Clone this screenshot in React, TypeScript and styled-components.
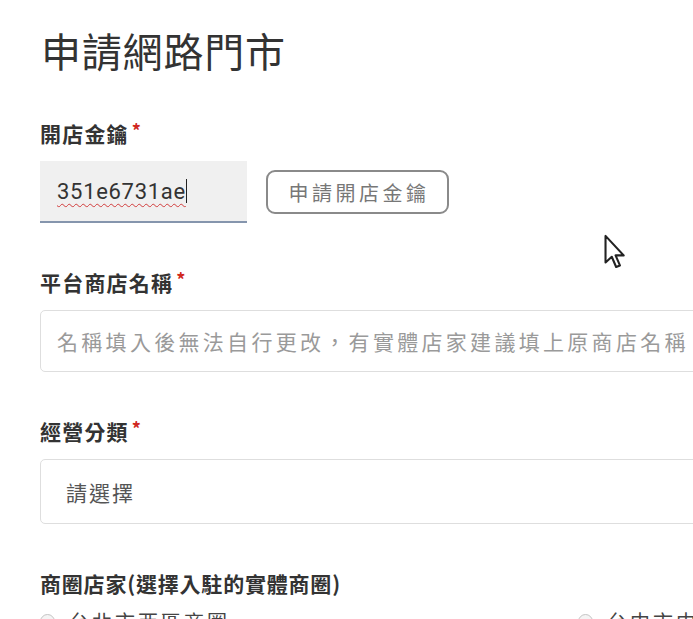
import styled, { createGlobalStyle } from 'styled-components';

const GlobalStyle = createGlobalStyle`
  html, body {
    margin: 0;
    padding: 0;
    background: #ffffff;
    overflow: hidden;
  }
  body {
    font-family: "Noto Sans CJK TC", "Noto Sans", sans-serif;
    color: #333;
  }
`;

const Page = styled.div`
  position: relative;
  width: 693px;
  height: 619px;
  overflow: hidden;
  padding: 26px 0 0 40px;
  box-sizing: border-box;
`;

const Title = styled.h1`
  margin: 0 0 44px 1px;
  font-size: 40px;
  line-height: 48px;
  font-weight: 400;
  letter-spacing: 0.8px;
  color: #333;
`;

const Field = styled.div`
  margin-bottom: 44px;
`;

const Label = styled.div`
  display: flex;
  align-items: center;
  height: 30px;
  margin-bottom: 13px;
  font-size: 21px;
  font-weight: 700;
  letter-spacing: 1.2px;
  color: #333;
`;

const Required = styled.span`
  color: #d0281e;
  font-size: 18px;
  font-weight: 700;
  margin-left: 3px;
  transform: translateY(-3px);
`;

const Row = styled.div`
  display: flex;
  align-items: center;
  gap: 19px;
`;

const KeyField = styled.div`
  width: 207px;
  height: 62px;
  background: #f0f0f0;
  border-bottom: 2px solid #8595ad;
  display: flex;
  align-items: center;
  padding-left: 17px;
  box-sizing: border-box;
  font-family: Roboto, "Liberation Sans", sans-serif;
  font-size: 22px;
  letter-spacing: 0.7px;
  color: #333;
`;

const KeyValue = styled.span`
  text-decoration: underline wavy #d23c3c;
  text-decoration-thickness: 1px;
  text-underline-offset: 4px;
`;

const Caret = styled.span`
  display: inline-block;
  width: 1.5px;
  height: 24px;
  background: #222;
`;

const OutlineButton = styled.button`
  width: 183px;
  height: 44px;
  border: 2px solid #8a8a8a;
  border-radius: 9px;
  background: #fff;
  color: #777;
  font-family: "Noto Sans CJK TC", sans-serif;
  font-size: 20px;
  letter-spacing: 3.5px;
  padding: 0 0 0 3px;
  cursor: pointer;
`;

const TextBox = styled.div<{ $height: number; $indent: number }>`
  width: 720px;
  height: ${(p) => p.$height}px;
  border: 1px solid #dedede;
  border-radius: 5px;
  box-sizing: border-box;
  display: flex;
  align-items: center;
  padding-left: ${(p) => p.$indent}px;
  font-size: 21px;
  white-space: nowrap;
  overflow: hidden;
`;

const Placeholder = styled.span`
  color: #9a9a9a;
  letter-spacing: 3.3px;
`;

const SelectText = styled.span`
  color: #555;
  letter-spacing: 2px;
`;

const PlainLabel = styled(Label)`
  margin-bottom: 9px;
  letter-spacing: 0.8px;
`;

const RadioGroup = styled.div`
  display: grid;
  grid-template-columns: 538px 200px;
`;

const RadioItem = styled.label`
  display: flex;
  align-items: center;
  gap: 14px;
  font-size: 20px;
  color: #444;
  letter-spacing: 3px;
  white-space: nowrap;
`;

const RadioDot = styled.span`
  width: 15px;
  height: 15px;
  border-radius: 50%;
  border: 1.5px solid #c4c4c4;
  background: #f4f4f4;
  box-sizing: border-box;
`;

const Pointer = styled.svg`
  position: absolute;
  left: 603px;
  top: 234px;
`;

export default function App() {
  return (
    <>
      <GlobalStyle />
      <Page>
        <Title>申請網路門市</Title>

        <Field>
          <Label>
            開店金鑰<Required>*</Required>
          </Label>
          <Row>
            <KeyField>
              <KeyValue>351e6731ae</KeyValue>
              <Caret />
            </KeyField>
            <OutlineButton>申請開店金鑰</OutlineButton>
          </Row>
        </Field>

        <Field>
          <Label>
            平台商店名稱<Required>*</Required>
          </Label>
          <TextBox $height={62} $indent={16}>
            <Placeholder>名稱填入後無法自行更改，有實體店家建議填上原商店名稱</Placeholder>
          </TextBox>
        </Field>

        <Field>
          <Label>
            經營分類<Required>*</Required>
          </Label>
          <TextBox $height={65} $indent={25}>
            <SelectText>請選擇</SelectText>
          </TextBox>
        </Field>

        <div>
          <PlainLabel>商圈店家(選擇入駐的實體商圈)</PlainLabel>
          <RadioGroup>
            <RadioItem>
              <RadioDot />
              台北市西區商圈
            </RadioItem>
            <RadioItem>
              <RadioDot />
              台中市中區商圈
            </RadioItem>
          </RadioGroup>
        </div>

        <Pointer width="24" height="36" viewBox="0 0 12 19">
          <path
            d="M1 1 L1 15 L4.3 12 L6.6 17.4 L8.6 16.6 L6.3 11.3 L10.6 11.3 Z"
            fill="#fff"
            stroke="#222"
            strokeWidth="1.1"
            strokeLinejoin="round"
          />
        </Pointer>
      </Page>
    </>
  );
}
